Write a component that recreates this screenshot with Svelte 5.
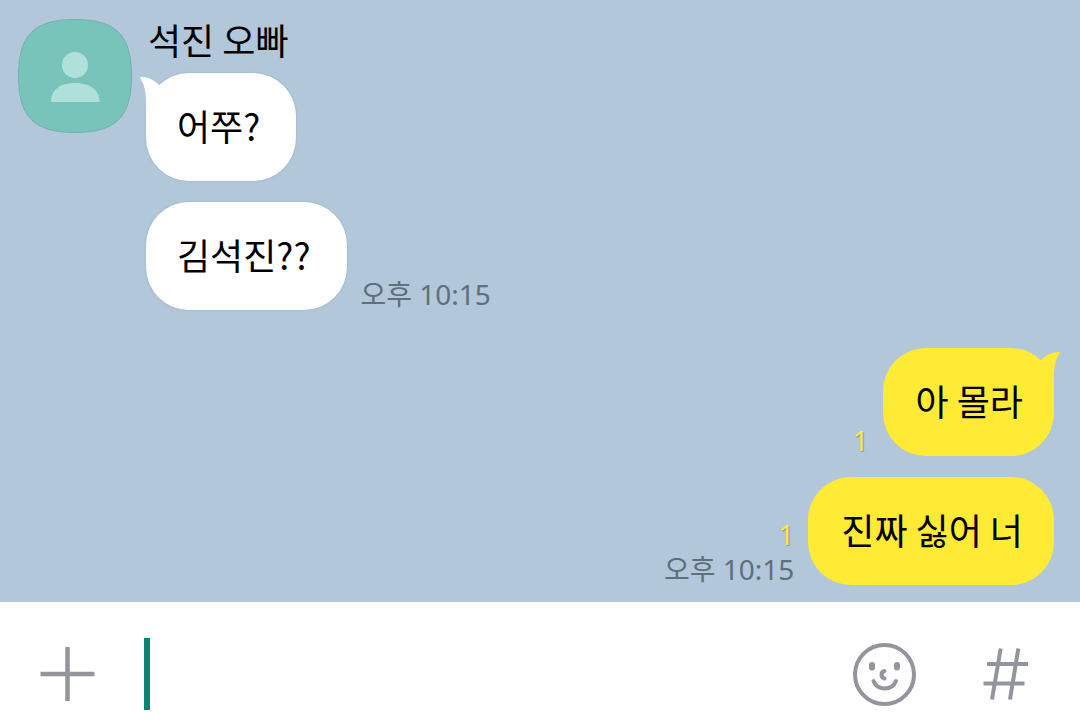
<script lang="ts">
	interface Message {
		id: number;
		text: string;
		unread?: number;
		time?: string;
	}

	const friend = '석진 오빠';

	const received: Message[] = [
		{ id: 1, text: '어쭈?' },
		{ id: 2, text: '김석진??', time: '오후 10:15' }
	];

	const sent: Message[] = [
		{ id: 3, text: '아 몰라', unread: 1 },
		{ id: 4, text: '진짜 싫어 너', unread: 1, time: '오후 10:15' }
	];

	let draft = $state('');
</script>

{#snippet tail()}
	<svg class="tail" viewBox="0 0 24 44" aria-hidden="true">
		<path d="M0 5Q0 3.500 2 4C9 4.500 14 7 19 12L24 44H6V30C6 18 4.500 12 0 5Z" />
	</svg>
{/snippet}

<div class="room">
	<main class="chat">
		<section class="group">
			<svg class="avatar" viewBox="0 0 114 114" aria-hidden="true">
				<path
					class="avatar-shape"
					d="M57 .5C98 .5 113.500 16 113.500 57S98 113.500 57 113.500 .5 98 .5 57 16 .5 57 .5Z" />
				<circle class="person" cx="57" cy="46" r="13" />
				<path class="person" d="M33 83C33 70 43 64 57 64s24.500 6 24.500 19Z" />
			</svg>
			<div class="thread">
				<h1 class="name">{friend}</h1>
				{#each received as message, index (message.id)}
					<div class="row">
						<div class="bubble">
							{#if index === 0}
								{@render tail()}
							{/if}
							{message.text}
						</div>
						{#if message.time}
							<div class="meta"><time>{message.time}</time></div>
						{/if}
					</div>
				{/each}
			</div>
		</section>

		<section class="group mine">
			{#each sent as message, index (message.id)}
				<div class="row">
					<div class="meta">
						<span class="unread">{message.unread}</span>
						{#if message.time}
							<time>{message.time}</time>
						{/if}
					</div>
					<div class="bubble">
						{#if index === 0}
							{@render tail()}
						{/if}
						{message.text}
					</div>
				</div>
			{/each}
		</section>
	</main>

	<form class="composer" onsubmit={(event) => event.preventDefault()}>
		<button type="button" aria-label="추가">
			<svg width="64" height="64" viewBox="0 0 64 64">
				<path d="M4.500 32h54M31.500 5v54" stroke-width="4.500" />
			</svg>
		</button>
		<label class="field">
			<span class="caret"></span>
			<input type="text" bind:value={draft} aria-label="메시지 입력" />
		</label>
		<div class="actions">
			<button type="button" aria-label="이모티콘">
				<svg width="64" height="64" viewBox="0 0 64 64">
					<circle cx="32.500" cy="32.500" r="29.500" stroke-width="4" />
					<path
						d="M20 23v2.500M45 23v2.500"
						stroke-width="6"
						stroke-linecap="round" />
					<path
						d="M32.500 29c-4 1-4 6.500 0 7.500M21.500 39c4 10 18.500 10 22.500 0"
						stroke-width="4"
						stroke-linecap="round" />
				</svg>
			</button>
			<button type="button" aria-label="샵검색">
				<svg width="64" height="64" viewBox="0 0 64 64">
					<path
						d="M24.700 6.500 16 57.500M42.300 6.500 34 57.500M11 22h41M7.500 41.500h41"
						stroke-width="4" />
				</svg>
			</button>
		</div>
	</form>
</div>

<style>
	:global(body) {
		background: #fff;
	}

	.room {
		display: flex;
		flex-direction: column;
		min-height: 100vh;
		font-family: 'Noto Sans CJK KR', sans-serif;
		color: #000;
	}

	.chat {
		flex: 1;
		display: flex;
		flex-direction: column;
		gap: 38px;
		padding: 19px 26px 17px 18px;
		background: #b2c7da;
	}

	.group {
		display: flex;
		align-items: flex-start;
		gap: 14px;
	}

	.mine {
		flex-direction: column;
		align-items: flex-end;
		gap: 21px;
	}

	.avatar {
		flex: none;
		width: 114px;
		height: 114px;
	}

	.avatar-shape {
		fill: #79c4ba;
		stroke: #6eb2b0;
	}

	.person {
		fill: #afe0da;
	}

	.thread {
		display: flex;
		flex-direction: column;
		gap: 21px;
	}

	.name {
		margin: 0 0 -7px 2px;
		font-size: 36px;
		font-weight: 400;
		line-height: 40px;
	}

	.row {
		display: flex;
		align-items: flex-end;
		gap: 14px;
	}

	.bubble {
		position: relative;
		padding: 30px 36px 34px 31px;
		border-radius: 43px;
		background: #fff;
		box-shadow: 0 0 2px rgba(60, 80, 100, 0.25);
		font-size: 36px;
		line-height: 44px;
		white-space: nowrap;
	}

	.mine .bubble {
		padding: 30px 31px 34px 33px;
		background: #ffea35;
		box-shadow: none;
	}

	.tail {
		position: absolute;
		top: 0;
		left: -6px;
		width: 24px;
		height: 44px;
		fill: #fff;
	}

	.mine .tail {
		left: auto;
		right: -6px;
		fill: #ffea35;
		transform: scaleX(-1);
	}

	.meta {
		display: flex;
		flex-direction: column;
		gap: 4px;
		font-family: 'Noto Sans', 'Noto Sans CJK KR', sans-serif;
		font-size: 28px;
		line-height: 31px;
		color: #5f6f7c;
	}

	.mine .meta {
		align-items: flex-end;
	}

	.unread {
		color: #f7e94a;
		text-shadow: 1px 1px 1px rgba(80, 90, 80, 0.5);
	}

	.composer {
		display: flex;
		align-items: center;
		gap: 44px;
		padding: 36px 40px 16px 36px;
		background: #fff;
	}

	.composer button {
		flex: none;
		padding: 0;
		border: 0;
		background: none;
		line-height: 0;
	}

	.composer svg {
		fill: none;
		stroke: #92959c;
	}

	.field {
		flex: 1;
		display: flex;
		align-items: center;
		height: 72px;
	}

	.caret {
		width: 6px;
		height: 72px;
		background: #098473;
	}

	.field input {
		flex: 1;
		min-width: 0;
		padding: 0;
		border: 0;
		outline: 0;
		background: none;
		font: inherit;
		font-size: 36px;
	}

	.actions {
		display: flex;
		gap: 60px;
	}
</style>
